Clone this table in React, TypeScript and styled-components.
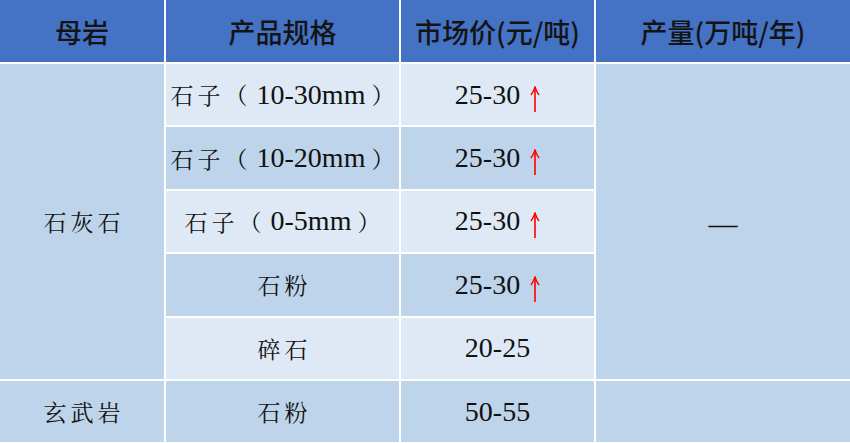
import React from "react";
import styled, { createGlobalStyle } from "styled-components";

const Global = createGlobalStyle`
  html, body { margin: 0; padding: 0; background: #ffffff; }
  #root { width: 850px; height: 443px; overflow: hidden; }
`;

const LIGHT = "#DEE9F5";
const DARK = "#BED4EB";
const SERIF = `"Liberation Serif", "Times New Roman", serif`;
const SONG = `"Noto Serif CJK SC", "Noto Sans CJK SC", serif`;

const Table = styled.div`
  display: grid;
  grid-template-columns: 164px 233px 193px 1fr;
  grid-template-rows: 62px repeat(6, 61.4px);
  gap: 2px;
  width: 850px;
  background: #ffffff;
`;

const HeadCell = styled.div`
  display: flex;
  align-items: center;
  justify-content: center;
  background: #4472c4;
  color: #141414;
  font-family: "Noto Sans CJK SC", "Noto Sans", sans-serif;
  font-weight: 500;
  font-size: 27px;
  white-space: nowrap;
`;

const Cell = styled.div<{ $dark?: boolean; $span?: number }>`
  display: flex;
  align-items: center;
  justify-content: center;
  background: ${(p) => (p.$dark ? DARK : LIGHT)};
  color: #111111;
  font-family: ${SERIF};
  font-size: 28px;
  white-space: nowrap;
  ${(p) => (p.$span ? `grid-row: span ${p.$span};` : "")}
`;

const Han = styled.span<{ $tail?: boolean }>`
  font-family: ${SONG};
  font-size: 23px;
  font-weight: 400;
  letter-spacing: 4px;
  ${(p) => (p.$tail ? "margin-right: -4px;" : "")}
`;

const Lat = styled.span<{ $pad?: boolean }>`
  font-family: ${SERIF};
  font-size: 28px;
  ${(p) => (p.$pad ? "padding: 0 6px 0 5px;" : "")}
`;

const Dash = styled.span`
  font-family: ${SERIF};
  font-size: 29px;
  margin-top: 6px;
`;

const ArrowBox = styled.svg`
  width: 10px;
  height: 26px;
  margin-left: 10px;
  margin-top: 8px;
  flex: none;
`;

const UpArrow = () => (
  <ArrowBox viewBox="0 0 10 26">
    <path d="M5 1.5 L5 26" stroke="#ff0000" strokeWidth="1.6" fill="none" />
    <path d="M1 9 Q3.8 5 5 1 Q6.2 5 9 9" stroke="#ff0000" strokeWidth="1.4" fill="none" />
  </ArrowBox>
);

type Row = { spec: React.ReactNode; price: string; up: boolean };

const Spec = ({ size }: { size: string }) => (
  <>
    <Han>石子（</Han>
    <Lat $pad>{size}</Lat>
    <Han $tail>）</Han>
  </>
);

const rows: Row[] = [
  { spec: <Spec size="10-30mm" />, price: "25-30", up: true },
  { spec: <Spec size="10-20mm" />, price: "25-30", up: true },
  { spec: <Spec size="0-5mm" />, price: "25-30", up: true },
  { spec: <Han $tail>石粉</Han>, price: "25-30", up: true },
  { spec: <Han $tail>碎石</Han>, price: "20-25", up: false },
];

export default function App() {
  return (
    <>
      <Global />
      <Table>
        <HeadCell>母岩</HeadCell>
        <HeadCell>产品规格</HeadCell>
        <HeadCell>市场价(元/吨)</HeadCell>
        <HeadCell>产量(万吨/年)</HeadCell>

        {rows.map((r, i) => (
          <React.Fragment key={i}>
            {i === 0 && (
              <Cell $dark $span={5}>
                <Han $tail>石灰石</Han>
              </Cell>
            )}
            <Cell $dark={i % 2 === 1}>{r.spec}</Cell>
            <Cell $dark={i % 2 === 1}>
              <Lat>{r.price}</Lat>
              {r.up && <UpArrow />}
            </Cell>
            {i === 0 && (
              <Cell $dark $span={5}>
                <Dash>—</Dash>
              </Cell>
            )}
          </React.Fragment>
        ))}

        <Cell $dark>
          <Han $tail>玄武岩</Han>
        </Cell>
        <Cell $dark>
          <Han $tail>石粉</Han>
        </Cell>
        <Cell $dark>
          <Lat>50-55</Lat>
        </Cell>
        <Cell $dark />
      </Table>
    </>
  );
}
